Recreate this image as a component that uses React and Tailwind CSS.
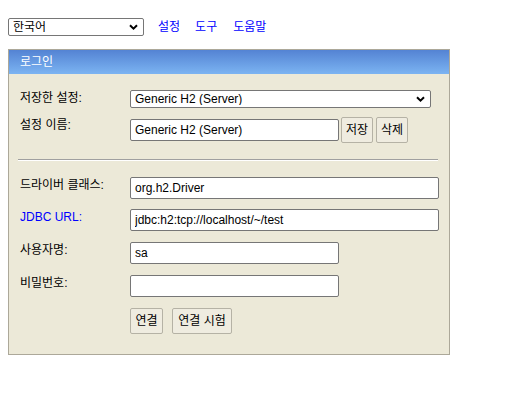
import React from "react";

const font = "font-['Liberation_Sans','Noto_Sans_CJK_KR',sans-serif]";

function Chevron() {
  return (
    <svg
      width="9"
      height="6"
      viewBox="0 0 9 6"
      className="pointer-events-none absolute right-[6px] top-1/2 -translate-y-1/2"
    >
      <path d="M1 1.2 L4.5 4.6 L8 1.2" fill="none" stroke="#000" strokeWidth="2" />
    </svg>
  );
}

function Select({ value, className }) {
  return (
    <div className={"relative " + className}>
      <select
        defaultValue={value}
        className="h-full w-full appearance-none rounded-[2px] border border-[#767676] bg-white pl-[4px] pr-[16px] text-[12px] leading-none text-black outline-none"
      >
        <option>{value}</option>
      </select>
      <Chevron />
    </div>
  );
}

function Input({ value, className }) {
  return (
    <input
      defaultValue={value}
      className={
        "h-[22px] rounded-[2px] border border-[#767676] bg-white pl-[4px] text-[12px] text-black outline-none " +
        className
      }
    />
  );
}

function Btn({ children, className }) {
  return (
    <button
      className={
        "flex items-center justify-center rounded-[2px] border border-[#b5b2a5] bg-[#efece0] text-[12px] leading-none text-black " +
        className
      }
    >
      {children}
    </button>
  );
}

function Label({ children, blue }) {
  return (
    <div
      className={
        "w-[110px] shrink-0 pt-[1px] text-[12px] leading-[15px] " +
        (blue ? "text-[#0000ff]" : "text-black")
      }
    >
      {children}
    </div>
  );
}

export default function App() {
  return (
    <div className={"min-h-[404px] w-[507px] bg-white text-[12px] text-black " + font}>
      <div className="flex items-center pl-[8px] pt-[18px]">
        <Select value="한국어" className="h-[18px] w-[136px]" />
        <div className="ml-[14px] flex items-center text-[12px] text-[#0000ff]">
          <a className="cursor-pointer">설정</a>
          <a className="ml-[15px] cursor-pointer">도구</a>
          <a className="ml-[16px] cursor-pointer">도움말</a>
        </div>
      </div>

      <div className="ml-[8px] mt-[13px] h-[306px] w-[442px] border border-[#aca899] bg-[#ece9d8]">
        <div className="flex h-[24px] items-center bg-linear-to-b from-[#5483d3] to-[#7cb4f2] pl-[11px] text-[12px] text-white">
          로그인
        </div>

        <div className="pl-[11px] pt-[16px]">
          <div className="flex items-start">
            <Label>저장한 설정:</Label>
            <Select value="Generic H2 (Server)" className="h-[18px] w-[301px]" />
          </div>

          <div className="mt-[9px] flex items-start">
            <Label>설정 이름:</Label>
            <div className="flex h-[26px] items-center">
              <Input value="Generic H2 (Server)" className="w-[209px]" />
              <Btn className="ml-[2px] h-[26px] w-[32px]">저장</Btn>
              <Btn className="ml-[3px] h-[26px] w-[32px]">삭제</Btn>
            </div>
          </div>

          <div className="ml-[-2px] mt-[16px] h-[2px] w-[420px] border-t border-b border-t-[#a0a0a0] border-b-[#ffffff]" />

          <div className="mt-[16px] flex items-start">
            <Label>드라이버 클래스:</Label>
            <Input value="org.h2.Driver" className="w-[309px]" />
          </div>

          <div className="mt-[10px] flex items-start">
            <Label blue>JDBC URL:</Label>
            <Input value="jdbc:h2:tcp://localhost/~/test" className="w-[309px]" />
          </div>

          <div className="mt-[11px] flex items-start">
            <Label>사용자명:</Label>
            <Input value="sa" className="w-[209px]" />
          </div>

          <div className="mt-[11px] flex items-start">
            <Label>비밀번호:</Label>
            <Input value="" className="w-[209px]" />
          </div>

          <div className="mt-[11px] flex items-start">
            <div className="w-[110px] shrink-0" />
            <Btn className="h-[26px] w-[33px]">연결</Btn>
            <Btn className="ml-[9px] h-[26px] w-[60px]">연결 시험</Btn>
          </div>
        </div>
      </div>
    </div>
  );
}
